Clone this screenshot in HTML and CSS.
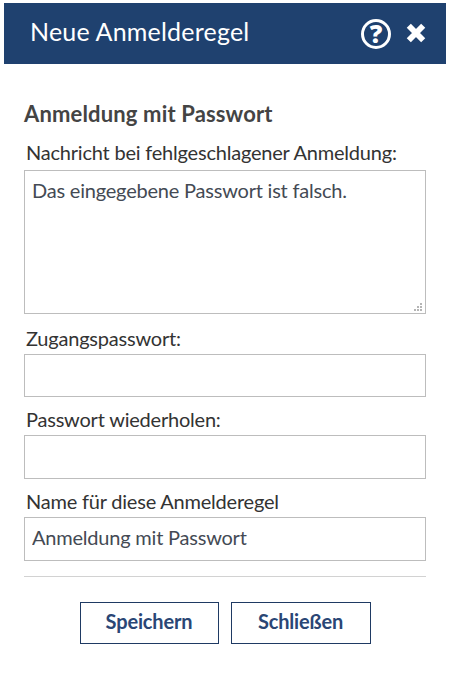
FILE: index.html
```html
<!DOCTYPE html>
<html lang="de">
<head>
    <meta charset="UTF-8">
    <meta name="viewport" content="width=device-width, initial-scale=1.0">
    <title>Neue Anmelderegel</title>
    <link rel="stylesheet" href="styles.css">
</head>
<body>
    <div class="dialog">
        <header class="dialog-header">
            <h1>Neue Anmelderegel</h1>
            <div class="actions">
                <span class="help">?</span>
                <svg class="close" width="20" height="20" viewBox="0 0 20 20">
                    <path d="M2.8 2.8 L17.2 17.2 M17.2 2.8 L2.8 17.2" stroke="#fff" stroke-width="5.8"/>
                </svg>
            </div>
        </header>

        <form class="dialog-body">
            <h2>Anmeldung mit Passwort</h2>

            <div class="field message">
                <label for="nachricht">Nachricht bei fehlgeschlagener Anmeldung:</label>
                <div class="textarea-wrap">
                    <textarea id="nachricht" spellcheck="false">Das eingegebene Passwort ist falsch.</textarea>
                    <!-- Anfasser zum Vergrößern -->
                    <svg class="grip" width="8" height="8" viewBox="0 0 8 8">
                        <path d="M6 0h2v2h-2z M3 3h2v2h-2z M6 3h2v2h-2z M0 6h2v2h-2z M3 6h2v2h-2z M6 6h2v2h-2z" fill="#b5b5b5"/>
                    </svg>
                </div>
            </div>

            <div class="field first-password">
                <label for="passwort">Zugangspasswort:</label>
                <input type="password" id="passwort">
            </div>

            <div class="field">
                <label for="passwort2">Passwort wiederholen:</label>
                <input type="password" id="passwort2">
            </div>

            <div class="field">
                <label for="name">Name für diese Anmelderegel</label>
                <input type="text" id="name" value="Anmeldung mit Passwort" spellcheck="false">
            </div>

            <div class="buttons">
                <button type="button">Speichern</button>
                <button type="button" class="cancel">Schließen</button>
            </div>
        </form>
    </div>
</body>
</html>
```
FILE: styles.css
```css
* {
    box-sizing: border-box;
}

body {
    margin: 0;
    padding: 3px 3px 0 4px;
    background-color: #fff;
    color: #333;
    font-family: Lato, sans-serif;
    font-size: 20px;
    line-height: 24px;
    letter-spacing: -0.21px;
}

/* Kopfzeile */
.dialog-header {
    display: flex;
    justify-content: space-between;
    align-items: center;
    height: 61px;
    padding: 0 20px 0 26px;
    background-color: #1f416f;
    color: #fff;
}

.dialog-header h1 {
    margin: 0 0 5px;
    font-size: 25px;
    font-weight: normal;
    line-height: 30px;
    letter-spacing: 0.2px;
}

.actions {
    display: flex;
    align-items: center;
    gap: 15px;
}

.help {
    display: flex;
    justify-content: center;
    align-items: center;
    width: 30px;
    height: 30px;
    padding-bottom: 1px;
    border: 3px solid #fff;
    border-radius: 50%;
    font-family: "Open Sans", sans-serif;
    font-size: 25px;
    font-weight: 800;
    letter-spacing: 0;
}

.close {
    display: block;
    margin-bottom: 1px;
}

/* Formular */
.dialog-body {
    padding: 36px 20px 0 20px;
}

.dialog-body h2 {
    margin: 0 0 13px;
    color: #444;
    font-size: 22px;
    line-height: 27px;
    letter-spacing: 0.15px;
}

.field {
    margin-top: 10px;
}

.field label {
    display: block;
    margin-bottom: 4px;
    padding-left: 2px;
}

.field input,
.field textarea {
    display: block;
    width: 100%;
    height: 44px;
    margin: 0;
    padding: 0 7px 4px;
    border: 1px solid #bdbdbd;
    border-radius: 0;
    outline: none;
    background-color: #fff;
    color: #444a54;
    font: inherit;
    letter-spacing: inherit;
}

.field textarea {
    height: 144px;
    padding-top: 7px;
    resize: none;
}

.message {
    margin-top: 0;
}

.message label {
    margin-bottom: 6px;
}

.first-password {
    margin-top: 12px;
}

.first-password input {
    height: 43px;
}

.textarea-wrap {
    position: relative;
}

.grip {
    position: absolute;
    right: 4px;
    bottom: 3px;
}

/* Schaltflächen */
.buttons {
    display: flex;
    justify-content: center;
    gap: 12px;
    margin-top: 15px;
    padding-top: 25px;
    border-top: 1px solid #d2d2d2;
}

.buttons button {
    width: 139px;
    height: 42px;
    padding: 0 0 4px;
    border: 1px solid #1f3a63;
    background-color: #fff;
    color: #2a4675;
    font: inherit;
    font-weight: bold;
    letter-spacing: -0.15px;
}

.buttons .cancel {
    width: 140px;
}
```
